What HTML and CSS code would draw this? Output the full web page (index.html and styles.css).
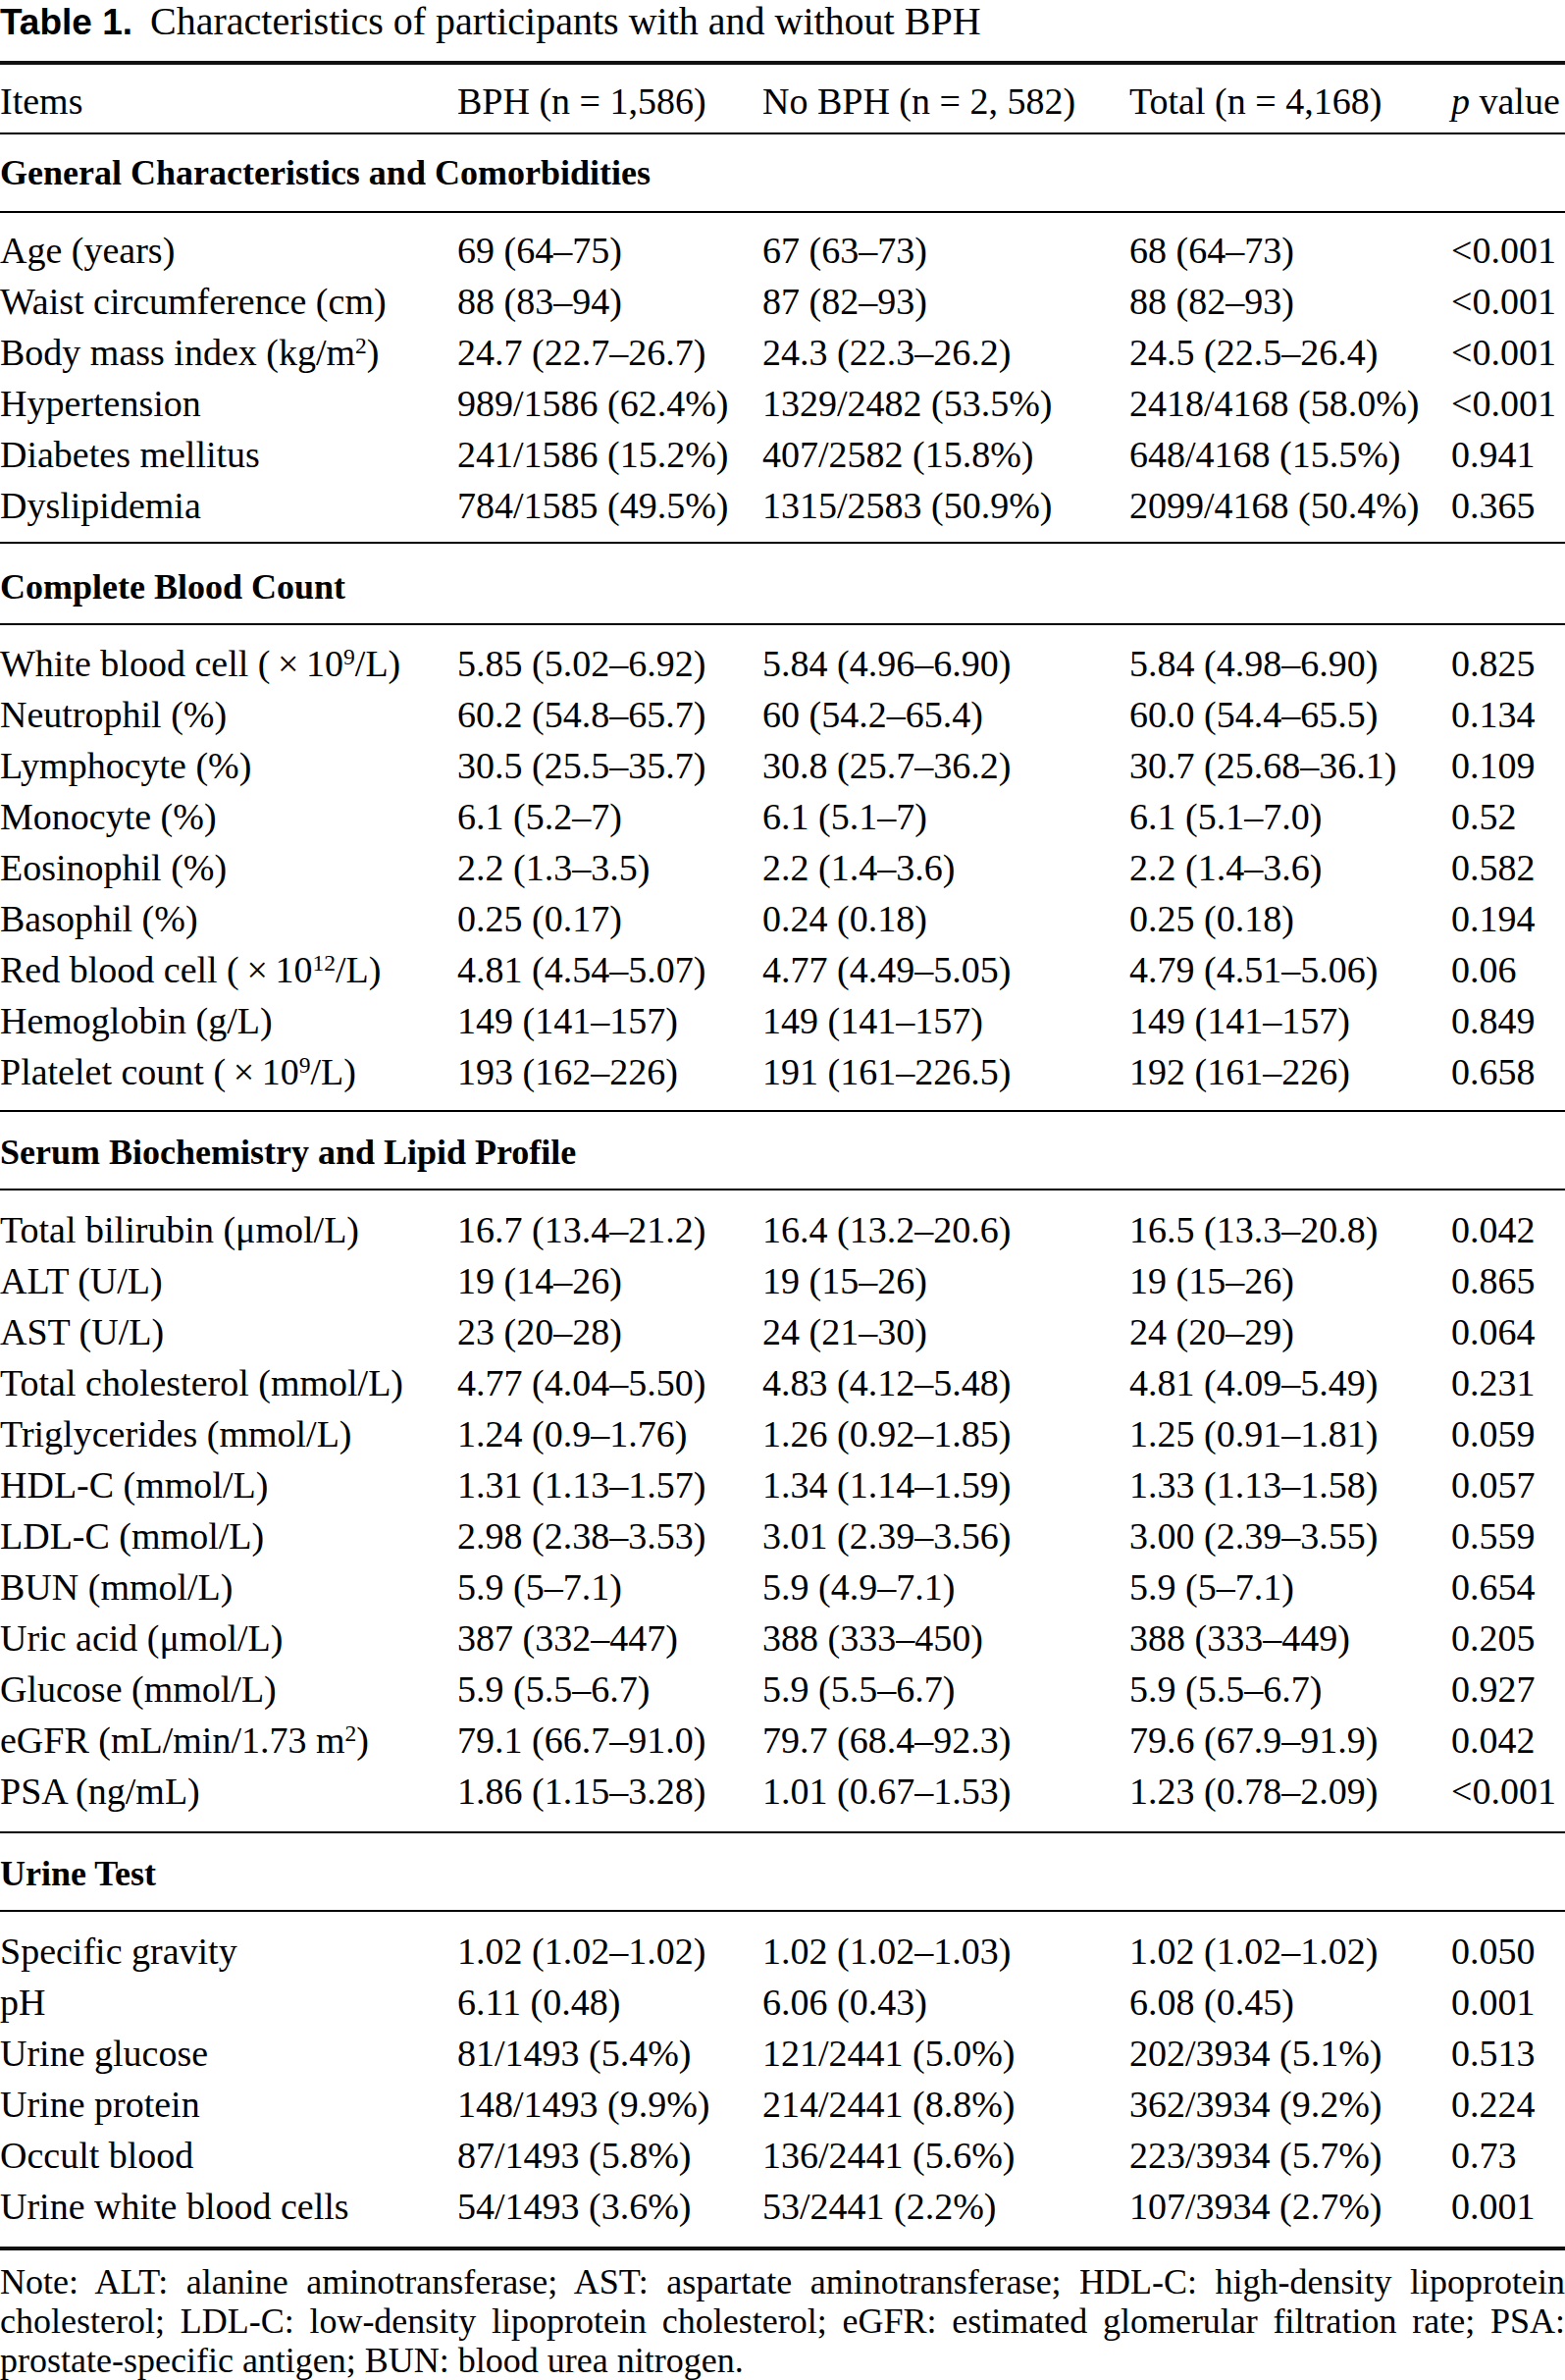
FILE: index.html
```html
<!DOCTYPE html>
<html lang="en">

<head>
    <meta charset="UTF-8">
    <meta name="viewport" content="width=device-width, initial-scale=1.0">
    <title>Table 1</title>
    <link rel="stylesheet" href="styles.css">
</head>

<body>
    <div class="page">
        <div class="caption">
            <span class="caption-label">Table 1.</span>
            <span class="caption-text">Characteristics of participants with and without BPH</span>
        </div>

        <table class="data-table">
            <colgroup>
                <col class="col-item">
                <col class="col-bph">
                <col class="col-nobph">
                <col class="col-total">
                <col class="col-p">
            </colgroup>
            <thead>
                <tr>
                    <th>Items</th>
                    <th>BPH (n = 1,586)</th>
                    <th>No BPH (n = 2, 582)</th>
                    <th>Total (n = 4,168)</th>
                    <th><i>p</i> value</th>
                </tr>
            </thead>

            <tbody class="group-head first">
                <tr><td colspan="5">General Characteristics and Comorbidities</td></tr>
            </tbody>
            <tbody class="group tight">
                <tr><td>Age (years)</td><td>69 (64–75)</td><td>67 (63–73)</td><td>68 (64–73)</td><td>&lt;0.001</td></tr>
                <tr><td>Waist circumference (cm)</td><td>88 (83–94)</td><td>87 (82–93)</td><td>88 (82–93)</td><td>&lt;0.001</td></tr>
                <tr><td>Body mass index (kg/m<sup>2</sup>)</td><td>24.7 (22.7–26.7)</td><td>24.3 (22.3–26.2)</td><td>24.5 (22.5–26.4)</td><td>&lt;0.001</td></tr>
                <tr><td>Hypertension</td><td>989/1586 (62.4%)</td><td>1329/2482 (53.5%)</td><td>2418/4168 (58.0%)</td><td>&lt;0.001</td></tr>
                <tr><td>Diabetes mellitus</td><td>241/1586 (15.2%)</td><td>407/2582 (15.8%)</td><td>648/4168 (15.5%)</td><td>0.941</td></tr>
                <tr><td>Dyslipidemia</td><td>784/1585 (49.5%)</td><td>1315/2583 (50.9%)</td><td>2099/4168 (50.4%)</td><td>0.365</td></tr>
            </tbody>

            <tbody class="group-head tall">
                <tr><td colspan="5">Complete Blood Count</td></tr>
            </tbody>
            <tbody class="group">
                <tr><td>White blood cell (&thinsp;×&thinsp;10<sup>9</sup>/L)</td><td>5.85 (5.02–6.92)</td><td>5.84 (4.96–6.90)</td><td>5.84 (4.98–6.90)</td><td>0.825</td></tr>
                <tr><td>Neutrophil (%)</td><td>60.2 (54.8–65.7)</td><td>60 (54.2–65.4)</td><td>60.0 (54.4–65.5)</td><td>0.134</td></tr>
                <tr><td>Lymphocyte (%)</td><td>30.5 (25.5–35.7)</td><td>30.8 (25.7–36.2)</td><td>30.7 (25.68–36.1)</td><td>0.109</td></tr>
                <tr><td>Monocyte (%)</td><td>6.1 (5.2–7)</td><td>6.1 (5.1–7)</td><td>6.1 (5.1–7.0)</td><td>0.52</td></tr>
                <tr><td>Eosinophil (%)</td><td>2.2 (1.3–3.5)</td><td>2.2 (1.4–3.6)</td><td>2.2 (1.4–3.6)</td><td>0.582</td></tr>
                <tr><td>Basophil (%)</td><td>0.25 (0.17)</td><td>0.24 (0.18)</td><td>0.25 (0.18)</td><td>0.194</td></tr>
                <tr><td>Red blood cell (&thinsp;×&thinsp;10<sup>12</sup>/L)</td><td>4.81 (4.54–5.07)</td><td>4.77 (4.49–5.05)</td><td>4.79 (4.51–5.06)</td><td>0.06</td></tr>
                <tr><td>Hemoglobin (g/L)</td><td>149 (141–157)</td><td>149 (141–157)</td><td>149 (141–157)</td><td>0.849</td></tr>
                <tr><td>Platelet count (&thinsp;×&thinsp;10<sup>9</sup>/L)</td><td>193 (162–226)</td><td>191 (161–226.5)</td><td>192 (161–226)</td><td>0.658</td></tr>
            </tbody>

            <tbody class="group-head">
                <tr><td colspan="5">Serum Biochemistry and Lipid Profile</td></tr>
            </tbody>
            <tbody class="group roomy">
                <tr><td>Total bilirubin (μmol/L)</td><td>16.7 (13.4–21.2)</td><td>16.4 (13.2–20.6)</td><td>16.5 (13.3–20.8)</td><td>0.042</td></tr>
                <tr><td>ALT (U/L)</td><td>19 (14–26)</td><td>19 (15–26)</td><td>19 (15–26)</td><td>0.865</td></tr>
                <tr><td>AST (U/L)</td><td>23 (20–28)</td><td>24 (21–30)</td><td>24 (20–29)</td><td>0.064</td></tr>
                <tr><td>Total cholesterol (mmol/L)</td><td>4.77 (4.04–5.50)</td><td>4.83 (4.12–5.48)</td><td>4.81 (4.09–5.49)</td><td>0.231</td></tr>
                <tr><td>Triglycerides (mmol/L)</td><td>1.24 (0.9–1.76)</td><td>1.26 (0.92–1.85)</td><td>1.25 (0.91–1.81)</td><td>0.059</td></tr>
                <tr><td>HDL-C (mmol/L)</td><td>1.31 (1.13–1.57)</td><td>1.34 (1.14–1.59)</td><td>1.33 (1.13–1.58)</td><td>0.057</td></tr>
                <tr><td>LDL-C (mmol/L)</td><td>2.98 (2.38–3.53)</td><td>3.01 (2.39–3.56)</td><td>3.00 (2.39–3.55)</td><td>0.559</td></tr>
                <tr><td>BUN (mmol/L)</td><td>5.9 (5–7.1)</td><td>5.9 (4.9–7.1)</td><td>5.9 (5–7.1)</td><td>0.654</td></tr>
                <tr><td>Uric acid (μmol/L)</td><td>387 (332–447)</td><td>388 (333–450)</td><td>388 (333–449)</td><td>0.205</td></tr>
                <tr><td>Glucose (mmol/L)</td><td>5.9 (5.5–6.7)</td><td>5.9 (5.5–6.7)</td><td>5.9 (5.5–6.7)</td><td>0.927</td></tr>
                <tr><td>eGFR (mL/min/1.73 m<sup>2</sup>)</td><td>79.1 (66.7–91.0)</td><td>79.7 (68.4–92.3)</td><td>79.6 (67.9–91.9)</td><td>0.042</td></tr>
                <tr><td>PSA (ng/mL)</td><td>1.86 (1.15–3.28)</td><td>1.01 (0.67–1.53)</td><td>1.23 (0.78–2.09)</td><td>&lt;0.001</td></tr>
            </tbody>

            <tbody class="group-head">
                <tr><td colspan="5">Urine Test</td></tr>
            </tbody>
            <tbody class="group roomy last">
                <tr><td>Specific gravity</td><td>1.02 (1.02–1.02)</td><td>1.02 (1.02–1.03)</td><td>1.02 (1.02–1.02)</td><td>0.050</td></tr>
                <tr><td>pH</td><td>6.11 (0.48)</td><td>6.06 (0.43)</td><td>6.08 (0.45)</td><td>0.001</td></tr>
                <tr><td>Urine glucose</td><td>81/1493 (5.4%)</td><td>121/2441 (5.0%)</td><td>202/3934 (5.1%)</td><td>0.513</td></tr>
                <tr><td>Urine protein</td><td>148/1493 (9.9%)</td><td>214/2441 (8.8%)</td><td>362/3934 (9.2%)</td><td>0.224</td></tr>
                <tr><td>Occult blood</td><td>87/1493 (5.8%)</td><td>136/2441 (5.6%)</td><td>223/3934 (5.7%)</td><td>0.73</td></tr>
                <tr><td>Urine white blood cells</td><td>54/1493 (3.6%)</td><td>53/2441 (2.2%)</td><td>107/3934 (2.7%)</td><td>0.001</td></tr>
            </tbody>
        </table>

        <p class="note">
            Note: ALT: alanine aminotransferase; AST: aspartate aminotransferase; HDL-C: high-density lipoprotein
            cholesterol; LDL-C: low-density lipoprotein cholesterol; eGFR: estimated glomerular filtration rate; PSA:
            prostate-specific antigen; BUN: blood urea nitrogen.
        </p>
    </div>
</body>

</html>
```

FILE: styles.css
```css
* {
    margin: 0px;
    padding: 0px;
    box-sizing: border-box;
}

body {
    font-family: "Liberation Serif", "Times New Roman", serif;
    background-color: #ffffff;
    color: #000000;
}

.page {
    width: 1595px;
}

/* caption */
.caption {
    height: 62px;
    font-size: 40px;
    line-height: 44px;
    white-space: nowrap;
}

.caption-label {
    font-family: "Liberation Sans", Arial, sans-serif;
    font-weight: 700;
    font-size: 37px;
    margin-right: 8px;
}

.caption-text {
    font-size: 40px;
}

/* table */
.data-table {
    width: 1595px;
    table-layout: fixed;
    border-collapse: collapse;
    font-size: 38px;
}

.col-item { width: 466px; }
.col-bph { width: 311px; }
.col-nobph { width: 374px; }
.col-total { width: 328px; }
.col-p { width: 116px; }

.data-table th,
.data-table td {
    text-align: left;
    font-weight: 400;
    padding: 0px;
    white-space: nowrap;
    vertical-align: middle;
}

.data-table thead tr {
    border-top: 4px solid #111111;
    border-bottom: 2px solid #000000;
}

.data-table thead th {
    padding-top: 5px;
    line-height: 64px;
}

.group-head tr {
    border-bottom: 2px solid #000000;
}

.group-head td {
    padding-top: 4px;
    line-height: 74px;
    font-weight: 700;
    font-size: 36px;
}

.group-head.first td {
    padding-top: 1px;
    line-height: 77px;
}

.group-head.tall td {
    padding-top: 7px;
}

.group {
    border-bottom: 2px solid #000000;
}

.group.last {
    border-bottom: 4px solid #111111;
}

.group td {
    line-height: 52px;
}

.group tr:first-child td {
    padding-top: 13px;
}

.group tr:last-child td {
    padding-bottom: 13px;
}

.group.tight tr:first-child td {
    padding-top: 12px;
}

.group.tight tr:last-child td {
    padding-bottom: 11px;
}

.group.roomy tr:first-child td {
    padding-top: 14px;
}

.group.roomy tr:last-child td {
    padding-bottom: 15px;
}

sup {
    font-size: 0.62em;
    line-height: 0;
    vertical-align: 0.5em;
}

/* footnote */
.note {
    margin-top: 12px;
    font-size: 36px;
    line-height: 40px;
    text-align: justify;
}
```
